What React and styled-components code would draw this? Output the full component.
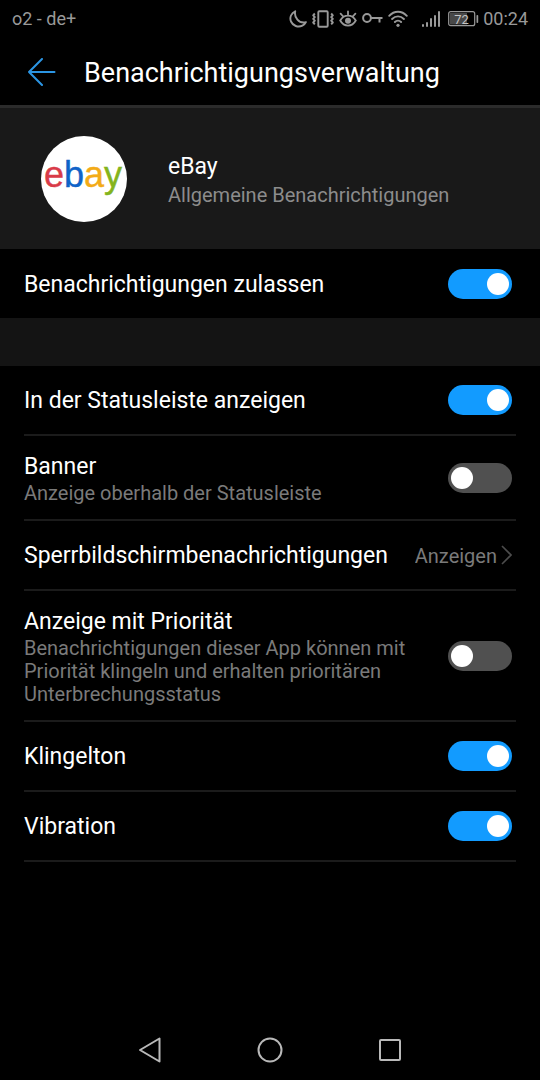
import React from "react";
import styled, { createGlobalStyle } from "styled-components";

const GlobalStyle = createGlobalStyle`
  *, *::before, *::after { box-sizing: border-box; }
  html, body, #root { height: 100%; }
  body {
    margin: 0;
    background: #000;
    color: #fff;
    font-family: Roboto, "Liberation Sans", sans-serif;
  }
  h1, h2, p, ul { margin: 0; padding: 0; font-weight: 400; }
  button, select, input { font: inherit; color: inherit; margin: 0; }
`;

const Screen = styled.div`
  min-height: 100%;
  display: flex;
  flex-direction: column;
`;

const StatusBar = styled.div`
  height: 38px;
  padding: 0 12px;
  display: flex;
  align-items: center;
  justify-content: space-between;
  color: #999;
  font-size: 18px;
  line-height: 22px;
`;

const StatusIcons = styled.div`
  display: flex;
  align-items: center;
  svg { display: block; }
`;

const TitleBar = styled.header`
  height: 70px;
  padding: 0 24px;
  border-bottom: 3px solid #2b2b2b;
  display: flex;
  align-items: center;
  gap: 24px;
`;

const IconButton = styled.button`
  padding: 0;
  border: 0;
  background: none;
  display: flex;
  align-items: center;
  justify-content: center;
  cursor: pointer;
`;

const BackButton = styled(IconButton)`
  width: 36px;
  height: 36px;
`;

const Title = styled.h1`
  padding-top: 3px;
  font-size: 27px;
  line-height: 32px;
`;

const AppPanel = styled.section`
  height: 141px;
  padding: 0 40px;
  background: #191919;
  display: flex;
  align-items: center;
  gap: 40px;
`;

const AppLogo = styled.svg`
  width: 88px;
  height: 88px;
  flex: none;
  display: block;
`;

const AppName = styled.h2`
  font-size: 23px;
  line-height: 28px;
`;

const Texts = styled.div`
  flex: 1;
  min-width: 0;
  padding-top: 2px;
`;

const AppTexts = styled(Texts)`
  padding-top: 5px;
`;

const Label = styled.label`
  display: block;
  font-size: 23px;
  line-height: 30px;
`;

const Hint = styled.p`
  max-width: 400px;
  color: ${(p) => (p.$light ? "#8c8c8c" : "#7a7a7a")};
  font-size: 20px;
  line-height: ${(p) => (p.$light ? 28 : 23)}px;
`;

const Group = styled.ul`
  list-style: none;
  padding: 0 24px;
`;

const Row = styled.li`
  min-height: ${(p) => (p.$divided ? 70 : 69)}px;
  padding: 14px 4px 14px 0;
  display: flex;
  align-items: center;
  gap: 16px;
  border-bottom: ${(p) => (p.$divided ? "2px solid #1b1b1b" : "0")};
`;

const Gap = styled.div`
  height: 48px;
  background: #141414;
`;

const Switch = styled.input`
  appearance: none;
  flex: none;
  width: 64px;
  height: 30px;
  padding: 4px 3px;
  border-radius: 15px;
  background: #505050;
  display: flex;
  justify-content: flex-start;
  cursor: pointer;
  &::before {
    content: "";
    width: 22px;
    height: 22px;
    border-radius: 50%;
    background: #fff;
  }
  &:checked {
    background: #129bff;
    justify-content: flex-end;
  }
`;

const Picker = styled.div`
  display: flex;
  align-items: center;
  gap: 4px;
  color: #7a7a7a;
  svg { display: block; }
`;

const Select = styled.select`
  appearance: none;
  field-sizing: content;
  border: 0;
  padding: 2px 0 0;
  background: transparent;
  color: #7a7a7a;
  font-size: 20px;
  line-height: 24px;
`;

const NavBar = styled.nav`
  height: 60px;
  margin-top: auto;
  display: flex;
  justify-content: center;
  gap: 80px;
`;

const NavButton = styled(IconButton)`
  width: 40px;
  color: #b9b9b9;
`;

const MoonIcon = () => (
  <svg width="18" height="18" viewBox="0 0 18 18" fill="none" stroke="currentColor" strokeWidth="1.9" strokeLinejoin="round">
    <path d="M6.200 1.300C2.300 3 .3 7.400 2 11.500c1.900 4.300 7 6.300 11.400 4.200 1.600-.8 2.800-2 3.500-3.500-3.300.7-6.400-.2-8.500-2.600C6.300 7.300 5.600 4.200 6.200 1.300z" />
  </svg>
);

const VibrateIcon = () => (
  <svg width="22" height="18" viewBox="0 0 22 18" fill="none" stroke="currentColor" strokeWidth="1.9" strokeLinejoin="round">
    <rect x="6.300" y="1.300" width="9.400" height="15.400" rx="1" />
    <path d="M2.800 3.500l-1.600 1.800 1.600 1.800-1.600 1.800 1.600 1.800-1.600 1.800 1.600 1.800M19.200 3.500l1.600 1.800-1.600 1.800 1.600 1.800-1.600 1.800 1.600 1.800-1.600 1.800" />
  </svg>
);

const EyeIcon = () => (
  <svg width="18" height="18" viewBox="0 0 18 18" fill="none" stroke="currentColor" strokeWidth="1.8" strokeLinecap="round">
    <path d="M1.200 10.500C3 7.500 5.700 5.700 9 5.700s6 1.800 7.800 4.800C15 13.700 12.300 15.600 9 15.600S3 13.700 1.200 10.500zM9 5.500V1.400M4.200 6.500L1.600 3.600M13.800 6.500l2.600-2.900" />
    <circle cx="9" cy="10.700" r="3" fill="currentColor" stroke="none" />
  </svg>
);

const KeyIcon = () => (
  <svg width="21" height="12" viewBox="0 0 21 12" fill="none" stroke="currentColor" strokeWidth="2">
    <circle cx="5" cy="5" r="3.900" />
    <path d="M8.800 5H20.500M17.500 5V9.500" />
  </svg>
);

const WifiIcon = () => (
  <svg width="20" height="18" viewBox="0 0 20 18" fill="none" stroke="currentColor" strokeWidth="1.9" strokeLinecap="round">
    <path d="M1.200 5.800C6.200.3 13.800.3 18.800 5.800M4.100 9c3.400-3.500 8.400-3.500 11.800 0M6.900 12c1.800-1.800 4.400-1.800 6.200 0" />
    <circle cx="10" cy="15.300" r="1.600" fill="currentColor" stroke="none" />
  </svg>
);

const SignalIcon = () => (
  <svg width="18" height="18" viewBox="0 0 18 18" fill="currentColor">
    <rect x="0" y="14" width="2" height="3" rx="1" />
    <rect x="4" y="12" width="2" height="5" rx="1" />
    <rect x="8" y="8" width="2" height="9" rx="1" />
    <rect x="12" y="5" width="2" height="12" rx="1" />
    <rect x="16" y="1" width="2" height="16" rx="1" />
  </svg>
);

const BatteryIcon = () => (
  <svg width="31" height="16" viewBox="0 0 31 16">
    <rect x="0.700" y="0.700" width="26" height="14" rx="2" fill="none" stroke="currentColor" strokeWidth="1.200" />
    <rect x="2" y="2" width="17" height="11.500" fill="#484848" />
    <rect x="28.500" y="4" width="1.700" height="8" rx="0.800" fill="currentColor" />
    <text x="13.500" y="12.500" textAnchor="middle" fontSize="13" fill="#c4c4c4">72</text>
  </svg>
);

const Spread = styled.div`
  display: flex;
  align-items: center;
  gap: ${(p) => p.$gap}px;
  margin-right: ${(p) => p.$after}px;
`;

const SwitchRow = ({ id, label, hint, on, divided }) => (
  <Row $divided={divided}>
    <Texts>
      <Label htmlFor={id}>{label}</Label>
      {hint && <Hint id={`${id}-hint`}>{hint}</Hint>}
    </Texts>
    <Switch
      id={id}
      type="checkbox"
      role="switch"
      defaultChecked={on}
      aria-describedby={hint ? `${id}-hint` : undefined}
    />
  </Row>
);

export default function App() {
  return (
    <Screen>
      <GlobalStyle />
      <StatusBar>
        <span>o2 - de+</span>
        <StatusIcons>
          <Spread $gap={5} $after={14}>
            <MoonIcon />
            <VibrateIcon />
            <EyeIcon />
            <KeyIcon />
            <WifiIcon />
          </Spread>
          <Spread $gap={8} $after={4}>
            <SignalIcon />
            <BatteryIcon />
          </Spread>
          <span>00:24</span>
        </StatusIcons>
      </StatusBar>

      <TitleBar>
        <BackButton type="button" aria-label="Zurück">
          <svg width="28" height="28" viewBox="0 0 28 28" fill="none" stroke="#2b95e3" strokeWidth="2" strokeLinecap="round" strokeLinejoin="round">
            <path d="M14 1L1 14l13 13M1 14h25.500" />
          </svg>
        </BackButton>
        <Title>Benachrichtigungsverwaltung</Title>
      </TitleBar>

      <main>
        <AppPanel>
          <AppLogo viewBox="0 0 88 88" role="img" aria-label="eBay">
            <circle cx="44" cy="44" r="43" fill="#fff" />
            <text x="4" y="52" fontFamily="'Liberation Sans', Arial, sans-serif" fontSize="36" strokeWidth="0.400">
              <tspan fill="#d93b48" stroke="#d93b48">e</tspan>
              <tspan fill="#0f63c8" stroke="#0f63c8">b</tspan>
              <tspan fill="#f3ab17" stroke="#f3ab17">a</tspan>
              <tspan fill="#84b41d" stroke="#84b41d">y</tspan>
            </text>
          </AppLogo>
          <AppTexts>
            <AppName>eBay</AppName>
            <Hint $light>Allgemeine Benachrichtigungen</Hint>
          </AppTexts>
        </AppPanel>

        <Group>
          <SwitchRow id="allow" label="Benachrichtigungen zulassen" on />
        </Group>
        <Gap />
        <Group>
          <SwitchRow id="statusbar" label="In der Statusleiste anzeigen" on divided />
          <SwitchRow id="banner" label="Banner" hint="Anzeige oberhalb der Statusleiste" divided />
          <Row $divided>
            <Texts>
              <Label htmlFor="lockscreen">Sperrbildschirmbenachrichtigungen</Label>
            </Texts>
            <Picker>
              <Select id="lockscreen" defaultValue="show">
                <option value="show">Anzeigen</option>
              </Select>
              <svg width="11" height="20" viewBox="0 0 11 20" fill="none" stroke="#4c4c4c" strokeWidth="1.600">
                <path d="M1 1l9 9-9 9" />
              </svg>
            </Picker>
          </Row>
          <SwitchRow
            id="priority"
            label="Anzeige mit Priorität"
            hint="Benachrichtigungen dieser App können mit Priorität klingeln und erhalten prioritären Unterbrechungsstatus"
            divided
          />
          <SwitchRow id="ringtone" label="Klingelton" on divided />
          <SwitchRow id="vibration" label="Vibration" on divided />
        </Group>
      </main>

      <NavBar aria-label="System">
        <NavButton type="button" aria-label="Zurück">
          <svg width="24" height="26" viewBox="0 0 24 26" fill="none" stroke="currentColor" strokeWidth="2" strokeLinejoin="round">
            <path d="M21.500 1.500v23L2 13z" />
          </svg>
        </NavButton>
        <NavButton type="button" aria-label="Startbildschirm">
          <svg width="26" height="26" viewBox="0 0 26 26" fill="none" stroke="currentColor" strokeWidth="2">
            <circle cx="13" cy="13" r="11.500" />
          </svg>
        </NavButton>
        <NavButton type="button" aria-label="Übersicht">
          <svg width="24" height="24" viewBox="0 0 24 24" fill="none" stroke="currentColor" strokeWidth="2" strokeLinejoin="round">
            <rect x="2" y="2" width="20" height="20" rx="1" />
          </svg>
        </NavButton>
      </NavBar>
    </Screen>
  );
}
